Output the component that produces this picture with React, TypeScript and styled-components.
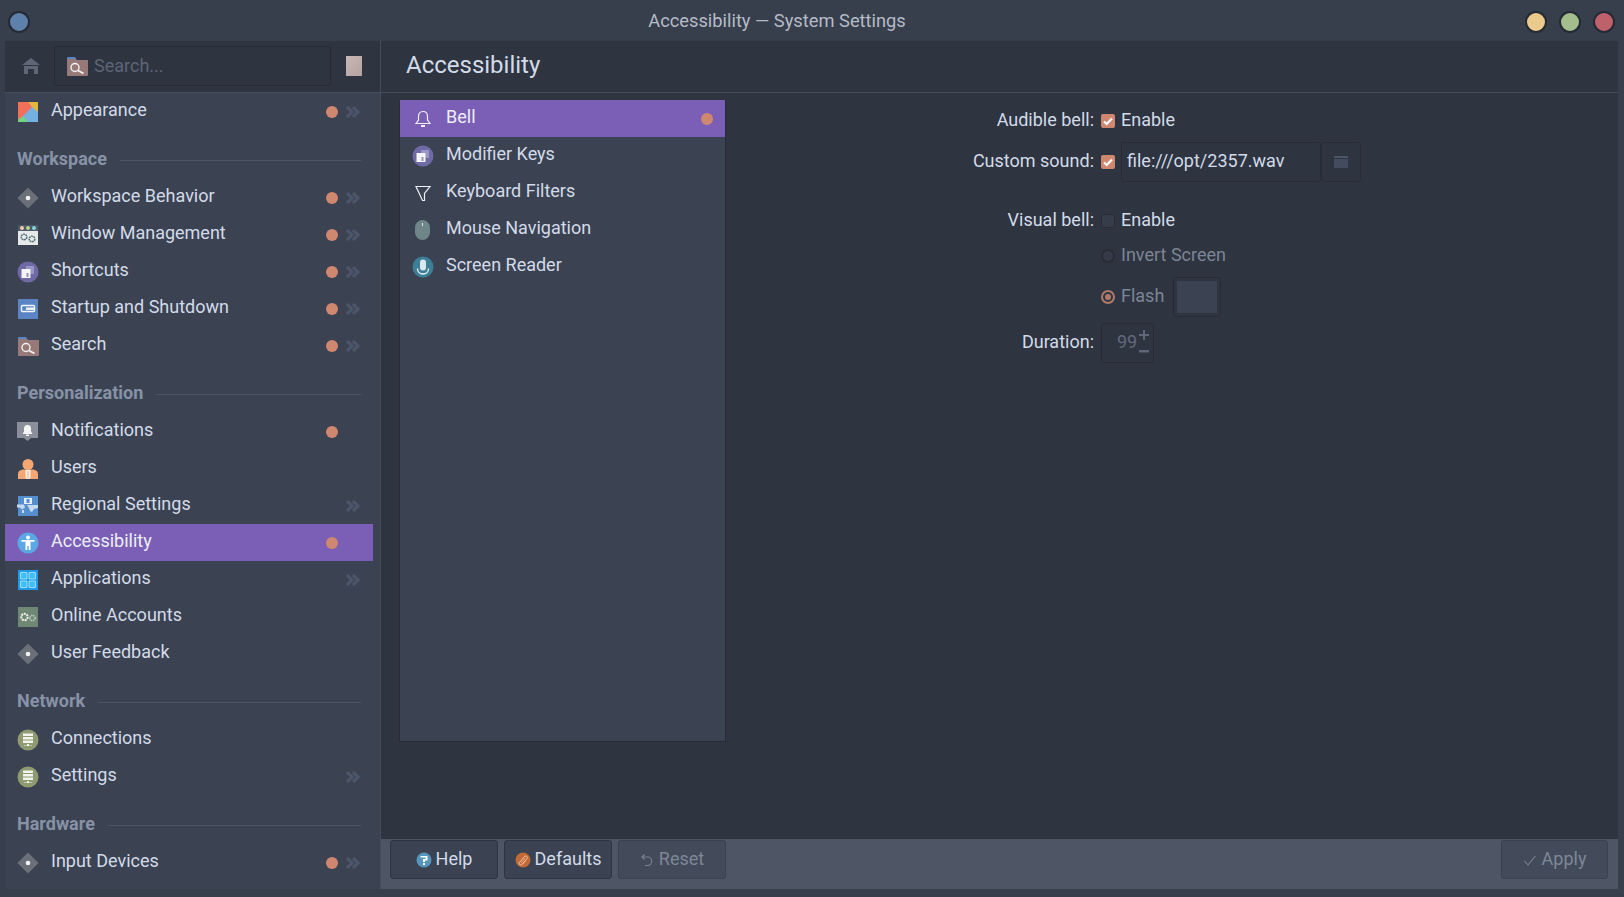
import React from "react";
import styled, { createGlobalStyle } from "styled-components";

const GlobalStyle = createGlobalStyle`
  html, body {
    margin: 0;
    padding: 0;
    background: #373e4c;
    font-family: Roboto, "Liberation Sans", sans-serif;
    overflow: hidden;
  }
`;

const Window = styled.div`
  width: 1624px;
  height: 897px;
  display: flex;
  flex-direction: column;
  background: #373e4c;
  color: #d2dbe9;
  font-size: 18px;
`;

const TitleBar = styled.div`
  height: 41px;
  flex: none;
  display: flex;
  align-items: center;
  justify-content: space-between;
  padding: 2px 9px 0 8px;
  box-sizing: border-box;
  position: relative;
`;

const Title = styled.div`
  position: absolute;
  left: 0;
  right: 70px;
  top: 9px;
  text-align: center;
  color: #b5bbc7;
  font-size: 18.3px;
  line-height: 24px;
`;

const TitleButtons = styled.div`
  display: flex;
  gap: 12px;
`;

const TitleButton = styled.span<{ $color: string }>`
  width: 18px;
  height: 18px;
  border-radius: 50%;
  background: ${p => p.$color};
  border: 2px solid #252a34;
  display: block;
`;

const Body = styled.div`
  flex: 1;
  display: flex;
  min-height: 0;
  margin: 0 6px 8px 5px;
`;

const Sidebar = styled.aside`
  width: 376px;
  flex: none;
  box-sizing: border-box;
  border-right: 1px solid #454c5b;
  background: #3b4252;
  display: flex;
  flex-direction: column;
`;

const SearchHeader = styled.div`
  height: 52px;
  flex: none;
  box-sizing: border-box;
  border-bottom: 1px solid #454c5b;
  background: #2e3440;
  display: flex;
  align-items: center;
  padding: 0 18px 2px 17px;
`;

const SearchBox = styled.div`
  width: 277px;
  height: 40px;
  margin-left: 14px;
  box-sizing: border-box;
  border: 1px solid #272c37;
  border-radius: 3px;
  display: flex;
  align-items: center;
  padding-left: 12px;
  gap: 6px;
  color: #5d6576;
`;

const SearchText = styled.span`
  padding-bottom: 1px;
`;

const SidebarToggle = styled.div`
  width: 16px;
  height: 20px;
  margin-left: auto;
  background: linear-gradient(135deg, #c9b9b6, #b3a29f);
`;

const NavList = styled.div`
  width: 368px;
  display: flex;
  flex-direction: column;
`;

const Row = styled.div<{ $active?: boolean }>`
  height: 37px;
  flex: none;
  display: flex;
  align-items: center;
  padding-left: 12px;
  padding-right: 13px;
  box-sizing: border-box;
  background: ${p => (p.$active ? "#7b5fb7" : "transparent")};
  color: ${p => (p.$active ? "#eceff4" : "#d2dbe9")};
`;

const RowIcon = styled.span`
  width: 22px;
  height: 22px;
  flex: none;
  display: flex;
  align-items: center;
  justify-content: center;
  margin-right: 12px;
`;

const RowLabel = styled.span`
  flex: 1;
  padding-bottom: 4px;
  line-height: 21px;
`;

const Dot = styled.span`
  width: 12px;
  height: 12px;
  border-radius: 50%;
  background: #d08770;
  flex: none;
`;

const RowTail = styled.span`
  width: 14px;
  margin-left: 8px;
  flex: none;
  display: flex;
  align-items: center;
`;

const DotSlot = styled.span`
  width: 12px;
  flex: none;
`;

const SectionHead = styled.div`
  height: 49px;
  flex: none;
  box-sizing: border-box;
  padding: 8px 12px 0 12px;
  display: flex;
  align-items: center;
  gap: 13px;
  color: #8792a6;
  font-weight: 700;
  font-size: 18px;
  &::after {
    content: "";
    flex: 1;
    height: 1px;
    background: #4c5566;
    margin-top: 4px;
  }
`;

const Main = styled.main`
  flex: 1;
  min-width: 0;
  display: flex;
  flex-direction: column;
  background: #2e3440;
`;

const PageHeader = styled.div`
  height: 52px;
  flex: none;
  box-sizing: border-box;
  border-bottom: 1px solid #454c5b;
  padding-left: 25px;
  padding-bottom: 3px;
  display: flex;
  align-items: center;
  font-size: 24px;
  color: #d2dbe9;
`;

const Content = styled.div`
  flex: 1;
  display: flex;
  min-height: 0;
  padding: 7px 0 0 18px;
`;

const ModuleList = styled.div`
  width: 327px;
  height: 642px;
  box-sizing: border-box;
  background: #3b4252;
  border: 1px solid #272c37;
  border-top: 0;
  display: flex;
  flex-direction: column;
`;

const ModuleRow = styled(Row)`
  padding-left: 12px;
  padding-right: 12px;
`;

const Form = styled.div`
  margin-left: 268px;
  width: 420px;
  padding-top: 2px;
`;

const FormRow = styled.div<{ $h: number; $top?: number }>`
  display: grid;
  grid-template-columns: 100px auto;
  column-gap: 7px;
  align-items: center;
  height: ${p => p.$h}px;
  margin-top: ${p => p.$top || 0}px;
`;

const FormLabel = styled.label`
  grid-column: 1;
  text-align: right;
  white-space: nowrap;
  justify-self: end;
  padding-bottom: 3px;
`;

const FormField = styled.div`
  grid-column: 2;
  display: flex;
  align-items: center;
`;

const Check = styled.span<{ $on?: boolean }>`
  width: 14px;
  height: 14px;
  border-radius: 2px;
  flex: none;
  display: flex;
  align-items: center;
  justify-content: center;
  background: ${p => (p.$on ? "#d08770" : "#363c49")};
  border: ${p => (p.$on ? "0" : "1px solid #272c37")};
  box-sizing: border-box;
  margin-right: 6px;
`;

const FieldText = styled.span<{ $dim?: boolean }>`
  color: ${p => (p.$dim ? "#7c8595" : "#d2dbe9")};
  padding-bottom: 3px;
`;

const Radio = styled.span<{ $on?: boolean }>`
  width: 14px;
  height: 14px;
  border-radius: 50%;
  flex: none;
  box-sizing: border-box;
  margin-right: 6px;
  background: ${p => (p.$on ? "transparent" : "#343a47")};
  border: 2px solid ${p => (p.$on ? "#b07a68" : "#272c37")};
  display: flex;
  align-items: center;
  justify-content: center;
  &::after {
    content: "";
    display: ${p => (p.$on ? "block" : "none")};
    width: 6px;
    height: 6px;
    border-radius: 50%;
    background: #b07a68;
  }
`;

const TextInput = styled.div`
  width: 200px;
  height: 40px;
  box-sizing: border-box;
  border: 1px solid #272c37;
  border-radius: 3px;
  display: flex;
  align-items: center;
  padding: 0 0 3px 5px;
`;

const FolderButton = styled.div`
  width: 40px;
  height: 40px;
  box-sizing: border-box;
  border: 1px solid #272c37;
  border-radius: 3px;
  display: flex;
  align-items: center;
  justify-content: center;
`;

const ColorSwatch = styled.div`
  width: 48px;
  height: 40px;
  margin-left: 9px;
  box-sizing: border-box;
  border: 1px solid #272c37;
  border-radius: 3px;
  padding: 3px;
  &::after {
    content: "";
    display: block;
    height: 100%;
    background: #3b4252;
  }
`;

const SpinBox = styled.div`
  width: 53px;
  height: 40px;
  box-sizing: border-box;
  border: 1px solid #272c37;
  border-radius: 3px;
  position: relative;
  color: #616a7a;
  padding: 7px 0 0 15px;
  line-height: 21px;
`;

const SpinMark = styled.svg<{ $top: number }>`
  position: absolute;
  right: 2px;
  top: ${p => p.$top}px;
`;

const Footer = styled.div`
  height: 49px;
  flex: none;
  background: #4e5666;
  display: flex;
  padding: 1px 10px 0 9px;
  gap: 6px;
`;

const FootButton = styled.div<{ $disabled?: boolean; $push?: boolean }>`
  width: ${p => (p.$push ? "107px" : "108px")};
  height: 39px;
  box-sizing: border-box;
  border-radius: 3px;
  border: 1px solid ${p => (p.$disabled ? "#3a404e" : "#2e3440")};
  background: ${p => (p.$disabled ? "#434a5a" : "#3b4252")};
  color: ${p => (p.$disabled ? "#7e8797" : "#d2dbe9")};
  display: flex;
  align-items: center;
  justify-content: center;
  gap: ${p => (p.$disabled ? "5px" : "4px")};
  margin-left: ${p => (p.$push ? "auto" : "0")};
  span {
    padding-bottom: 3px;
  }
`;

const Chevrons = () => (
  <svg width="14" height="12" viewBox="0 0 14 12" fill="none" stroke="#4c566a" strokeWidth="3.2">
    <path d="M1 1l5 5-5 5M7 1l5 5-5 5" />
  </svg>
);

const Diamond = () => (
  <svg width="22" height="22" viewBox="0 0 22 22">
    <rect x="3.500" y="3.500" width="15" height="15" transform="rotate(45 11 11)" fill="#6b6f78" />
    <circle cx="11" cy="11" r="2.300" fill="#f2f2f2" />
  </svg>
);

const AppearanceIcon = () => (
  <svg width="20" height="20" viewBox="0 0 20 20">
    <rect width="20" height="20" fill="#74b0e0" />
    <path d="M10 0h10v10l-6-5z" fill="#e6b63c" />
    <path d="M0 0h10l4 5-9 9-5 4z" fill="#f2705a" />
    <path d="M0 20v-2l5-4 5 6z" fill="#72d47e" />
  </svg>
);

const WindowIcon = () => (
  <svg width="20" height="20" viewBox="0 0 20 20">
    <rect width="20" height="20" fill="#e6e9e8" />
    <rect width="20" height="6" fill="#4d5a68" />
    <circle cx="4" cy="3" r="2" fill="#f1c9a6" />
    <circle cx="10" cy="3" r="2" fill="#b7d28d" />
    <circle cx="16" cy="3" r="2" fill="#89d3dd" />
    <circle cx="6" cy="12" r="2.800" fill="none" stroke="#4f7176" strokeWidth="1.500" strokeDasharray="1.800 .6" />
    <circle cx="14" cy="14" r="2.800" fill="none" stroke="#4f7176" strokeWidth="1.500" strokeDasharray="1.800 .6" />
  </svg>
);

const ShortcutIcon = () => (
  <svg width="22" height="22" viewBox="0 0 22 22">
    <circle cx="11" cy="11" r="10.500" fill="#6f6aa6" />
    <rect x="9" y="5" width="8" height="8" fill="#9a96c4" />
    <path d="M4.500 8h9v9h-9z" fill="#f5f5f8" />
    <path d="M9.500 12h2v4h-2z" fill="#6f6aa6" opacity="0.7" />
  </svg>
);

const StartupIcon = () => (
  <svg width="20" height="20" viewBox="0 0 20 20">
    <rect width="20" height="20" fill="#5b84c4" />
    <rect x="3.500" y="6.500" width="13" height="6" rx="1" fill="none" stroke="#f2f5fa" strokeWidth="1.400" />
    <rect x="8" y="8.500" width="8" height="2.400" fill="#f2f5fa" />
  </svg>
);

const SearchFolderIcon = () => (
  <svg width="21" height="20" viewBox="0 0 21 20">
    <path d="M0 2a1 1 0 011-1h7l2 3H0z" fill="#5b84c4" />
    <path d="M0 3h8l1.500 1H21v15a1 1 0 01-1 1H1a1 1 0 01-1-1z" fill="#977a78" />
    <circle cx="8" cy="11.500" r="4" fill="none" stroke="#f2f2f2" strokeWidth="1.400" />
    <path d="M11 14.500l5.500 3" stroke="#f2f2f2" strokeWidth="1.800" />
  </svg>
);

const NotifyIcon = () => (
  <svg width="22" height="22" viewBox="0 0 22 22">
    <path d="M0 1h21v16h-7l-3.500 3L7 17H0z" fill="#8a8f9a" />
    <path d="M10.500 4a3.500 3.500 0 00-3.500 3.500v3L5.500 13h10L14 10.500v-3A3.500 3.500 0 0010.500 4z" fill="#f5f5f5" />
    <rect x="9" y="13.500" width="3" height="1.500" fill="#f5f5f5" />
  </svg>
);

const UserIcon = () => (
  <svg width="20" height="20" viewBox="0 0 20 20">
    <circle cx="10" cy="5.500" r="5.500" fill="#f4a772" />
    <path d="M0 20v-5c0-3 2.500-4.500 6-4.500h8c3.500 0 6 1.500 6 4.500v5z" fill="#f4a772" />
    <path d="M7.500 11h5v7c0 1-1 2-2.500 2s-2.500-1-2.500-2z" fill="#fbf1e8" />
    <path d="M9.500 12h1v7h-1z" fill="#f4a772" />
  </svg>
);

const GlobeIcon = () => (
  <svg width="22" height="20" viewBox="0 0 22 20">
    <rect x="1" width="20" height="20" fill="#558fd0" />
    <rect x="7" y="2" width="8" height="6" fill="#e6eef7" />
    <path d="M9.500 3h3v4h-3z" fill="#558fd0" />
    <path d="M0 8.500h7l1 3-3 2-2-2H0zM10 9h11v3l-4 1-2 3-2-1-1-3zM5 14h2v3H5z" fill="#c5d9ef" />
  </svg>
);

const AccessIcon = () => (
  <svg width="22" height="22" viewBox="0 0 22 22">
    <circle cx="11" cy="11" r="10.500" fill="#5aa9e6" />
    <circle cx="11" cy="5.500" r="2" fill="#fff" />
    <path d="M4.500 8h13v1.800h-4V18h-1.800v-4h-1.400v4H8.500V9.800h-4z" fill="#fff" />
  </svg>
);

const AppsIcon = () => (
  <svg width="20" height="20" viewBox="0 0 20 20">
    <rect width="20" height="20" fill="#1f9be8" />
    <path d="M2.500 2.500h6.500v6.500H2.500zM11 2.500h6.500v6.500H11zM2.500 11h6.500v6.500H2.500zM11 11h6.500v6.500H11z" fill="#3fc0f5" stroke="#b5e6fb" strokeWidth="0.800" />
  </svg>
);

const AccountsIcon = () => (
  <svg width="20" height="20" viewBox="0 0 20 20">
    <rect width="20" height="20" fill="#6f8873" />
    <circle cx="6.500" cy="10" r="3.200" fill="none" stroke="#f2f2f2" strokeWidth="2" strokeDasharray="2 .8" />
    <circle cx="14.500" cy="11" r="2.600" fill="none" stroke="#b8c5ba" strokeWidth="1.600" strokeDasharray="1.500 .6" />
  </svg>
);

const ServerIcon = () => (
  <svg width="22" height="22" viewBox="0 0 22 22">
    <circle cx="11" cy="11" r="10.500" fill="#8f9a70" />
    <path d="M6 4.500h10V7H6zM6 8h10v2.500H6zM6 11.500h10V14H6z" fill="#f2f3ee" />
    <path d="M10 15h2v1.500h3V17H7v-.5h3z" fill="#f2f3ee" />
  </svg>
);

const BellIcon = () => (
  <svg width="22" height="22" viewBox="0 0 22 22" fill="none" stroke="#f2f2f6" strokeWidth="1.200">
    <path d="M11 3.500c-3 0-4.500 2.300-4.500 5v3.500L4 15.500h14L15.500 12V8.500c0-2.700-1.500-5-4.500-5z" />
    <path d="M9 17h4v2H9z" fill="#f2f2f6" stroke="none" />
  </svg>
);

const FilterIcon = () => (
  <svg width="22" height="22" viewBox="0 0 22 22" fill="none" stroke="#eef0f4" strokeWidth="1.200">
    <path d="M4 4.500h14l-5.500 7v7h-2z" />
  </svg>
);

const MouseIcon = () => (
  <svg width="22" height="22" viewBox="0 0 22 22">
    <rect x="3" y="1" width="15" height="20" rx="7.500" fill="#6f8689" />
    <path d="M10 4h1v3h-1z" fill="#dfe6e6" />
  </svg>
);

const MicIcon = () => (
  <svg width="22" height="22" viewBox="0 0 22 22">
    <circle cx="11" cy="11" r="10.500" fill="#3d7f96" />
    <rect x="8" y="3.500" width="6" height="11" rx="3" fill="#dbe9ee" />
    <path d="M5.500 12.500c0 3.500 2.500 5.500 5.500 5.500s5.500-2 5.500-5.500" fill="none" stroke="#f2f6f8" strokeWidth="1.300" />
  </svg>
);

const HomeIcon = () => (
  <svg width="18" height="16" viewBox="0 0 18 16">
    <path d="M9 0l9 7H0z" fill="#5f6776" />
    <path d="M2 8h14v8h-4v-5H6v5H2z" fill="#5f6776" />
  </svg>
);

const CheckMark = () => (
  <svg width="14" height="14" viewBox="0 0 14 14" fill="none" stroke="#fff" strokeWidth="2.200">
    <path d="M3 7.500l2.700 2.500L11 4.500" />
  </svg>
);

const FolderIcon = () => (
  <svg width="14" height="12" viewBox="0 0 14 12">
    <path d="M0 1a1 1 0 011-1h12a1 1 0 011 1v1H0z" fill="#4c566a" />
    <path d="M0 3h14v8a1 1 0 01-1 1H1a1 1 0 01-1-1z" fill="#434c5e" />
  </svg>
);

const HelpIcon = () => (
  <svg width="16" height="16" viewBox="0 0 16 16">
    <circle cx="8" cy="8" r="7.500" fill="#5596bd" />
    <path d="M4.500 4h7v4.500H9V10H7V7h2.500V5.500h-5z" fill="#fff" />
    <rect x="7" y="11" width="2" height="2" fill="#fff" />
  </svg>
);

const DefaultsIcon = () => (
  <svg width="16" height="16" viewBox="0 0 16 16">
    <circle cx="8" cy="8" r="7.500" fill="#c26a36" />
    <path d="M4 11l6-7c2 0 2.500 .8 2.500 2l-6 7c-1.500 0-2.500-.5-2.500-2z" fill="none" stroke="#eebf9f" strokeWidth="1" />
    <path d="M6 11l4-5M8 12l3-4" stroke="#eebf9f" strokeWidth=".7" />
  </svg>
);

const UndoIcon = () => (
  <svg width="14" height="14" viewBox="0 0 14 14" fill="none" stroke="#7a8393" strokeWidth="1.100">
    <path d="M4.500 1.500L2 4l2.500 2.500M2 4h5.500a4 4 0 010 8.500H5" />
  </svg>
);

const ApplyIcon = () => (
  <svg width="14" height="14" viewBox="0 0 14 14" fill="none" stroke="#7a8393" strokeWidth="1.100">
    <path d="M1.500 8l3.500 4 7.500-9" />
  </svg>
);

interface NavItem {
  label: string;
  icon: React.ReactNode;
  dot?: boolean;
  arrow?: boolean;
  active?: boolean;
}

const NavRow = ({ label, icon, dot, arrow, active }: NavItem) => (
  <Row $active={active}>
    <RowIcon>{icon}</RowIcon>
    <RowLabel>{label}</RowLabel>
    {dot ? <Dot /> : <DotSlot />}
    <RowTail>{arrow && <Chevrons />}</RowTail>
  </Row>
);

const sections: { title?: string; items: NavItem[] }[] = [
  { items: [{ label: "Appearance", icon: <AppearanceIcon />, dot: true, arrow: true }] },
  {
    title: "Workspace",
    items: [
      { label: "Workspace Behavior", icon: <Diamond />, dot: true, arrow: true },
      { label: "Window Management", icon: <WindowIcon />, dot: true, arrow: true },
      { label: "Shortcuts", icon: <ShortcutIcon />, dot: true, arrow: true },
      { label: "Startup and Shutdown", icon: <StartupIcon />, dot: true, arrow: true },
      { label: "Search", icon: <SearchFolderIcon />, dot: true, arrow: true }
    ]
  },
  {
    title: "Personalization",
    items: [
      { label: "Notifications", icon: <NotifyIcon />, dot: true },
      { label: "Users", icon: <UserIcon /> },
      { label: "Regional Settings", icon: <GlobeIcon />, arrow: true },
      { label: "Accessibility", icon: <AccessIcon />, dot: true, active: true },
      { label: "Applications", icon: <AppsIcon />, arrow: true },
      { label: "Online Accounts", icon: <AccountsIcon /> },
      { label: "User Feedback", icon: <Diamond /> }
    ]
  },
  {
    title: "Network",
    items: [
      { label: "Connections", icon: <ServerIcon /> },
      { label: "Settings", icon: <ServerIcon />, arrow: true }
    ]
  },
  {
    title: "Hardware",
    items: [{ label: "Input Devices", icon: <Diamond />, dot: true, arrow: true }]
  }
];

const modules = [
  { label: "Bell", icon: <BellIcon />, active: true, dot: true },
  { label: "Modifier Keys", icon: <ShortcutIcon /> },
  { label: "Keyboard Filters", icon: <FilterIcon /> },
  { label: "Mouse Navigation", icon: <MouseIcon /> },
  { label: "Screen Reader", icon: <MicIcon /> }
];

const App = () => (
  <Window>
    <GlobalStyle />
    <TitleBar>
      <TitleButton $color="#5e81ac" />
      <Title>Accessibility — System Settings</Title>
      <TitleButtons>
        <TitleButton $color="#ebcb8b" />
        <TitleButton $color="#a3be8c" />
        <TitleButton $color="#bf616a" />
      </TitleButtons>
    </TitleBar>
    <Body>
      <Sidebar>
        <SearchHeader>
          <HomeIcon />
          <SearchBox>
            <SearchFolderIcon />
            <SearchText>Search...</SearchText>
          </SearchBox>
          <SidebarToggle />
        </SearchHeader>
        <NavList>
          {sections.map((section, i) => (
            <React.Fragment key={i}>
              {section.title && <SectionHead>{section.title}</SectionHead>}
              {section.items.map(item => (
                <NavRow key={item.label} {...item} />
              ))}
            </React.Fragment>
          ))}
        </NavList>
      </Sidebar>
      <Main>
        <PageHeader>Accessibility</PageHeader>
        <Content>
          <ModuleList>
            {modules.map(m => (
              <ModuleRow key={m.label} $active={m.active}>
                <RowIcon>{m.icon}</RowIcon>
                <RowLabel>{m.label}</RowLabel>
                {m.dot && <Dot />}
              </ModuleRow>
            ))}
          </ModuleList>
          <Form>
            <FormRow $h={38}>
              <FormLabel>Audible bell:</FormLabel>
              <FormField>
                <Check $on>
                  <CheckMark />
                </Check>
                <FieldText>Enable</FieldText>
              </FormField>
            </FormRow>
            <FormRow $h={40} $top={2}>
              <FormLabel>Custom sound:</FormLabel>
              <FormField>
                <Check $on>
                  <CheckMark />
                </Check>
                <TextInput>file:///opt/2357.wav</TextInput>
                <FolderButton>
                  <FolderIcon />
                </FolderButton>
              </FormField>
            </FormRow>
            <FormRow $h={36} $top={21}>
              <FormLabel>Visual bell:</FormLabel>
              <FormField>
                <Check />
                <FieldText>Enable</FieldText>
              </FormField>
            </FormRow>
            <FormRow $h={36} $top={-1}>
              <FormField>
                <Radio />
                <FieldText $dim>Invert Screen</FieldText>
              </FormField>
            </FormRow>
            <FormRow $h={40} $top={3}>
              <FormField>
                <Radio $on />
                <FieldText $dim>Flash</FieldText>
                <ColorSwatch />
              </FormField>
            </FormRow>
            <FormRow $h={40} $top={6}>
              <FormLabel>Duration:</FormLabel>
              <FormField>
                <SpinBox>
                  99
                  <SpinMark $top={4} width="14" height="14" viewBox="0 0 14 14">
                    <path d="M6 2h2v4h4v2H8v4H6V8H2V6h4z" fill="#5d6576" />
                  </SpinMark>
                  <SpinMark $top={20} width="14" height="14" viewBox="0 0 14 14">
                    <path d="M2 6h10v2.500H2z" fill="#5d6576" />
                  </SpinMark>
                </SpinBox>
              </FormField>
            </FormRow>
          </Form>
        </Content>
        <Footer>
          <FootButton>
            <HelpIcon />
            <span>Help</span>
          </FootButton>
          <FootButton>
            <DefaultsIcon />
            <span>Defaults</span>
          </FootButton>
          <FootButton $disabled>
            <UndoIcon />
            <span>Reset</span>
          </FootButton>
          <FootButton $disabled $push>
            <ApplyIcon />
            <span>Apply</span>
          </FootButton>
        </Footer>
      </Main>
    </Body>
  </Window>
);

export default App;
